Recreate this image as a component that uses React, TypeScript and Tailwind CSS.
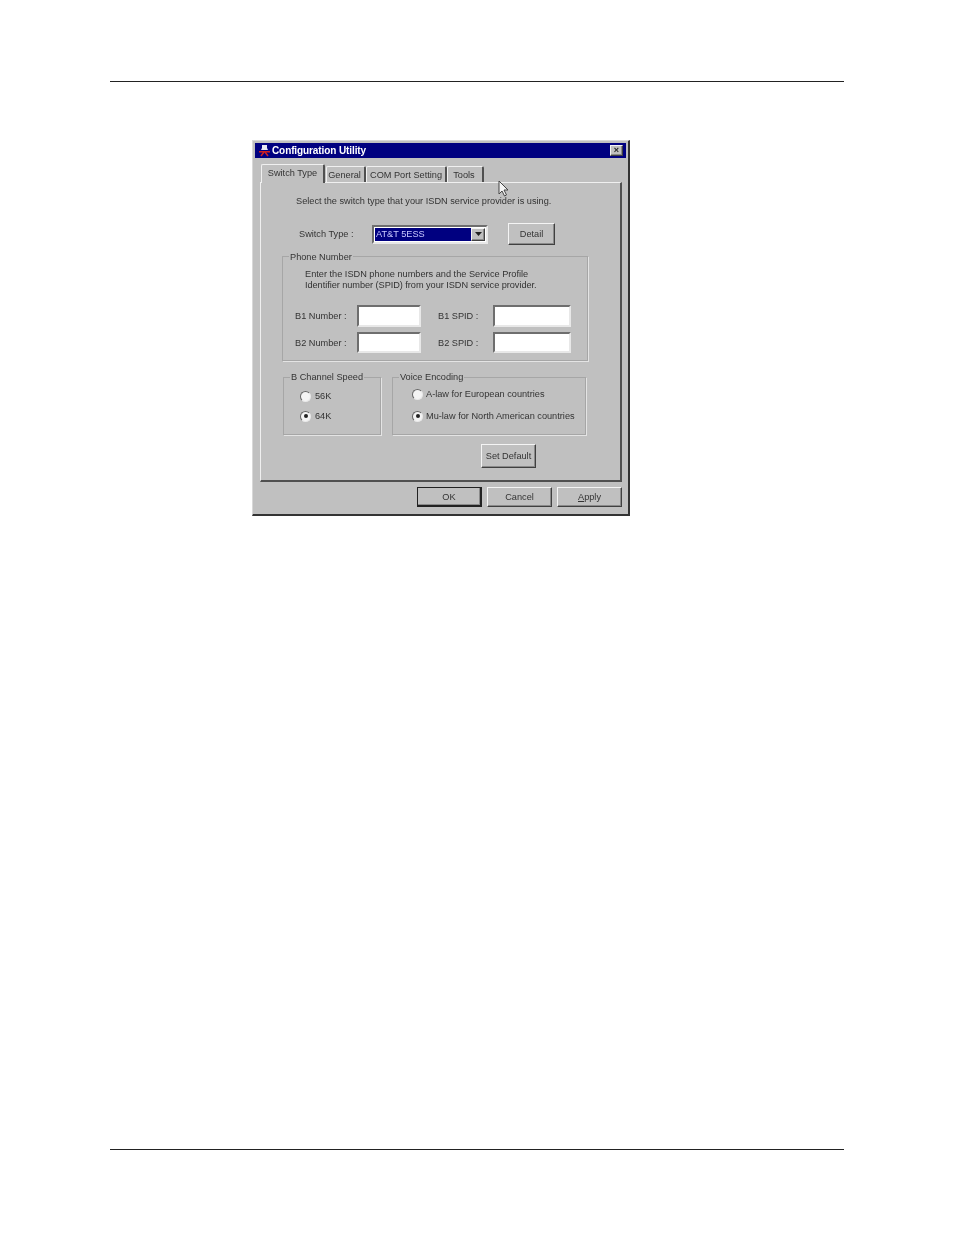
const raised = "bg-[#c0c0c0] border border-t-[#f4f4f4] border-l-[#f4f4f4] border-r-[#404040] border-b-[#404040] shadow-[inset_-1px_-1px_0_#8a8a8a]"
const sunken = "bg-white border-2 border-t-[#6e6e6e] border-l-[#6e6e6e] border-r-[#e8e8e8] border-b-[#e8e8e8]"

const Button = ({ className, children }: { className: string, children: React.ReactNode }) => (
	<div className={`${raised} flex items-center justify-center ${className}`}>{children}</div>
)

const Tab = ({ className, children }: { className: string, children: React.ReactNode }) => (
	<div className={`flex items-center justify-center whitespace-nowrap bg-[#c0c0c0] border-t border-l border-[#f0f0f0] border-r-2 border-r-[#505050] rounded-t-[2px] ${className}`}>{children}</div>
)

const Group = ({ title, className, titleClass, children }: { title: string, className: string, titleClass: string, children: React.ReactNode }) => (
	<div className={`relative border border-[#a6a6a6] shadow-[1px_1px_0_#e4e4e4] ${className}`}>
		<span className={`absolute left-[6px] bg-[#c0c0c0] px-px leading-[12px] whitespace-nowrap ${titleClass}`}>{title}</span>
		{children}
	</div>
)

const Radio = ({ checked }: { checked?: boolean }) => (
	<div className="w-[11px] h-[11px] shrink-0 rounded-full bg-[#f4f4f4] border border-t-[#666666] border-l-[#666666] border-r-[#e8e8e8] border-b-[#e8e8e8] flex items-center justify-center">
		{checked && <div className="w-[4px] h-[4px] rounded-full bg-[#222222]" />}
	</div>
)

const Dialog = () => (
	<div className="relative w-[378px] h-[376px] ml-[252px] mt-[58px] bg-[#c0c0c0] border-t border-l border-t-[#d8d8d8] border-l-[#d8d8d8] border-r-2 border-b-2 border-r-[#333333] border-b-[#333333] [filter:blur(0.7px)] text-[9.2px] leading-[12px] text-[#333333] font-['Liberation_Sans',Arial,sans-serif]">
		<div className="mx-[2px] mt-[2px] h-[15px] bg-[#000080] flex items-center justify-between pl-[3px] pr-[3px]">
			<div className="flex items-center gap-px">
				<svg width="13" height="13" viewBox="0 0 13 13">
					<path d="M4 1h5v3l1 2H3l1-2z" fill="#e8e8f4" />
					<path d="M1 7h11v1.500H1z" fill="#d02020" />
					<path d="M3 12l3-4M10 12L7 8" stroke="#d02020" strokeWidth="1.500" fill="none" />
				</svg>
				<span className="text-white font-bold text-[10px] tracking-[-0.1px]">Configuration Utility</span>
			</div>
			<div className={`${raised} w-[13px] h-[11px] flex items-center justify-center text-[9px] leading-[9px] font-bold text-[#222222]`}>×</div>
		</div>

		<div className="ml-[8px] mt-[5px] flex items-end h-[19px] relative z-10">
			<Tab className="w-[64px] h-[19px] pb-[2px] mb-[-1px] bg-[#c0c0c0]">Switch Type</Tab>
			<Tab className="w-[40px] h-[16px] ml-px pr-[2px]">General</Tab>
			<Tab className="w-[81px] h-[16px]">COM Port Setting</Tab>
			<Tab className="w-[37px] h-[16px] pr-[2px]">Tools</Tab>
		</div>

		<div className="ml-[7px] w-[362px] h-[300px] border border-t-[#f0f0f0] border-l-[#f0f0f0] border-r-2 border-b-2 border-r-[#505050] border-b-[#505050] pt-[12px]">
			<div className="pl-[35px] whitespace-nowrap">Select the switch type that your ISDN service provider is using.</div>
			<div className="flex items-center mt-[16px] h-[22px] pl-[38px]">
				<span className="w-[73px] whitespace-nowrap">Switch Type :</span>
				<div className={`${sunken} w-[116px] h-[19px] bg-white flex items-stretch p-px`}>
					<div className="flex-1 bg-[#000080] text-[#c8c8ff] pl-px flex items-center">AT&amp;T 5ESS</div>
					<div className={`${raised} w-[14px] flex items-center justify-center`}>
						<svg width="7" height="4" viewBox="0 0 7 4"><path d="M0 0h7L3.500 4z" fill="#222222" /></svg>
					</div>
				</div>
				<Button className="w-[47px] h-[22px] ml-[20px]">Detail</Button>
			</div>

			<Group title="Phone Number" titleClass="top-[-6px]" className="ml-[21px] mt-[11px] w-[306px] h-[105px] pt-[12px]">
				<div className="pl-[22px] leading-[11px] whitespace-nowrap">
					<div>Enter the ISDN phone numbers and the Service Profile</div>
					<div className="tracking-[-0.05px]">Identifier number (SPID) from your ISDN service provider.</div>
				</div>
				<div className="grid grid-cols-[62px_64px_17px_55px_78px] grid-rows-[22px_21px] gap-y-[5px] pl-[12px] mt-[14px] items-center">
					<span className="whitespace-nowrap">B1 Number :</span>
					<div className={`${sunken} h-full`} />
					<span />
					<span className="whitespace-nowrap">B1 SPID :</span>
					<div className={`${sunken} h-full`} />
					<span className="whitespace-nowrap">B2 Number :</span>
					<div className={`${sunken} h-full`} />
					<span />
					<span className="whitespace-nowrap">B2 SPID :</span>
					<div className={`${sunken} h-full`} />
				</div>
			</Group>

			<div className="flex ml-[22px] mt-[16px]">
				<Group title="B Channel Speed" titleClass="top-[-7px]" className="w-[98px] h-[58px] pt-[12px] pl-[16px]">
					<div className="flex items-center gap-[4px] h-[12px]"><Radio />56K</div>
					<div className="flex items-center gap-[4px] h-[12px] mt-[8px]"><Radio checked />64K</div>
				</Group>
				<Group title="Voice Encoding" titleClass="top-[-7px]" className="w-[194px] h-[58px] ml-[11px] pt-[10px] pl-[19px]">
					<div className="flex items-center gap-[3px] h-[12px] whitespace-nowrap"><Radio />A-law for European countries</div>
					<div className="flex items-center gap-[3px] h-[12px] mt-[10px] whitespace-nowrap"><Radio checked />Mu-law for North American countries</div>
				</Group>
			</div>

			<Button className="w-[55px] h-[24px] ml-[220px] mt-[9px]">Set Default</Button>
		</div>

		<div className="flex justify-end gap-[5px] mt-[5px] pr-[6px]">
			<Button className="w-[65px] h-[20px] !border-[#222222] border-r-2 border-b-2">OK</Button>
			<Button className="w-[65px] h-[20px]">Cancel</Button>
			<Button className="w-[65px] h-[20px]"><span><u>A</u>pply</span></Button>
		</div>

		<svg className="absolute left-[245px] top-[39px]" width="12" height="18" viewBox="0 0 12 18">
			<path d="M1 1v13l3-3 2.500 5 2-1-2.500-5h4z" fill="#f4f4f4" stroke="#444444" strokeWidth="1" />
		</svg>
	</div>
)

export default function App() {
	return (
		<div className="bg-white w-[954px] h-[1235px] overflow-hidden pt-[81px]">
			<div className="mx-[110px] h-px bg-[#222222]" />
			<Dialog />
			<div className="mx-[110px] h-px bg-[#222222] mt-[633px]" />
		</div>
	)
}
